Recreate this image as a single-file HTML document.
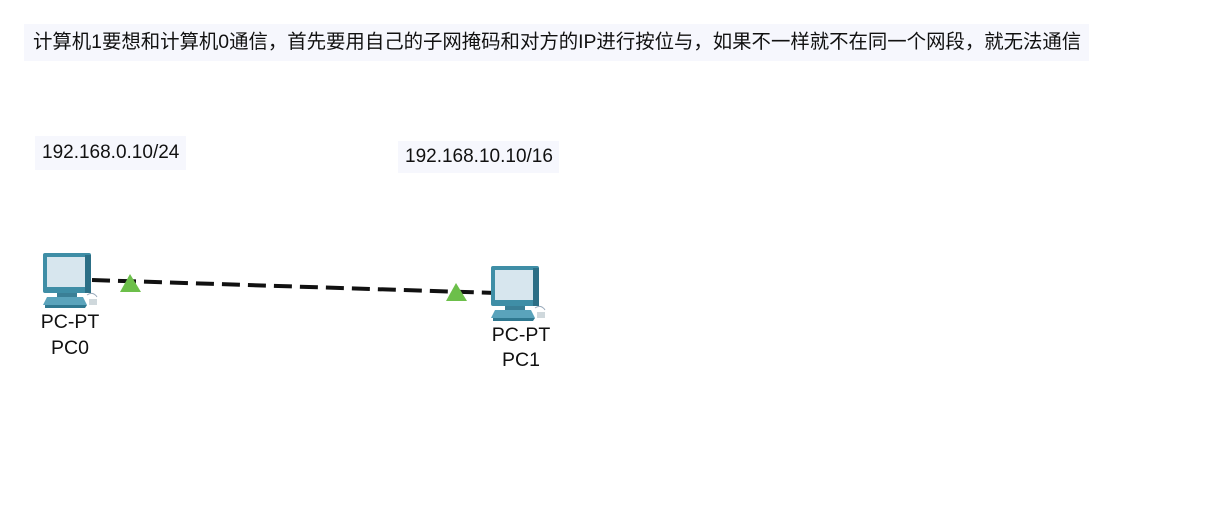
<!DOCTYPE html>
<html><head><meta charset="utf-8"><style>
body{margin:0;width:1206px;height:532px;background:#fff;position:relative;overflow:hidden;font-family:"Liberation Sans","Noto Sans CJK SC",sans-serif;}
.box{position:absolute;background:#f6f7fd;color:#111;}
.lbl{position:absolute;font-size:19.5px;color:#111;text-align:center;line-height:22px;}
</style></head><body>
<div class="box" style="left:24px;top:24px;width:1065px;height:37px;font-size:19.4px;line-height:37px;padding-left:9px;box-sizing:border-box;white-space:nowrap;">计算机1要想和计算机0通信，首先要用自己的子网掩码和对方的IP进行按位与，如果不一样就不在同一个网段，就无法通信</div>
<div class="box" style="left:35px;top:136px;width:151px;height:34px;font-size:19px;line-height:34px;padding-left:7px;box-sizing:border-box;white-space:nowrap;">192.168.0.10/24</div>
<div class="box" style="left:398px;top:141px;width:161px;height:32px;font-size:19px;line-height:32px;padding-left:7px;box-sizing:border-box;white-space:nowrap;">192.168.10.10/16</div>
<svg width="1206" height="532" style="position:absolute;left:0;top:0">
<defs>
<g id="pc">
<rect x="0" y="0" width="48" height="40" rx="2" fill="#3f8ea6"/>
<rect x="4" y="4" width="38" height="30" fill="#d7e6ee"/>
<rect x="42" y="2" width="6" height="38" fill="#2c6f86"/>
<rect x="14" y="40" width="20" height="4" fill="#3a7f96"/>
<polygon points="4,44 40,44 44,52 0,52" fill="#5aa3bb"/>
<polygon points="2,52 44,52 42,55 2,55" fill="#2f7890"/>
<rect x="46" y="46" width="8" height="6" fill="#cfd8dc"/>
<path d="M44,42 q6,-4 10,2" stroke="#9ab" fill="none"/>
</g>
</defs>
<line x1="92" y1="280" x2="496" y2="293" stroke="#111" stroke-width="4" stroke-dasharray="18,8"/>
<use href="#pc" x="43" y="253"/>
<use href="#pc" x="491" y="266"/>
<polygon points="130,274 120,292 141,292" fill="#6cbf4a"/>
<polygon points="456,283 446,301 467,301" fill="#6cbf4a"/>
</svg>
<div class="lbl" style="left:30px;top:311px;width:80px;">PC-PT</div>
<div class="lbl" style="left:30px;top:337px;width:80px;">PC0</div>
<div class="lbl" style="left:481px;top:324px;width:80px;">PC-PT</div>
<div class="lbl" style="left:481px;top:349px;width:80px;">PC1</div>
</body></html>
